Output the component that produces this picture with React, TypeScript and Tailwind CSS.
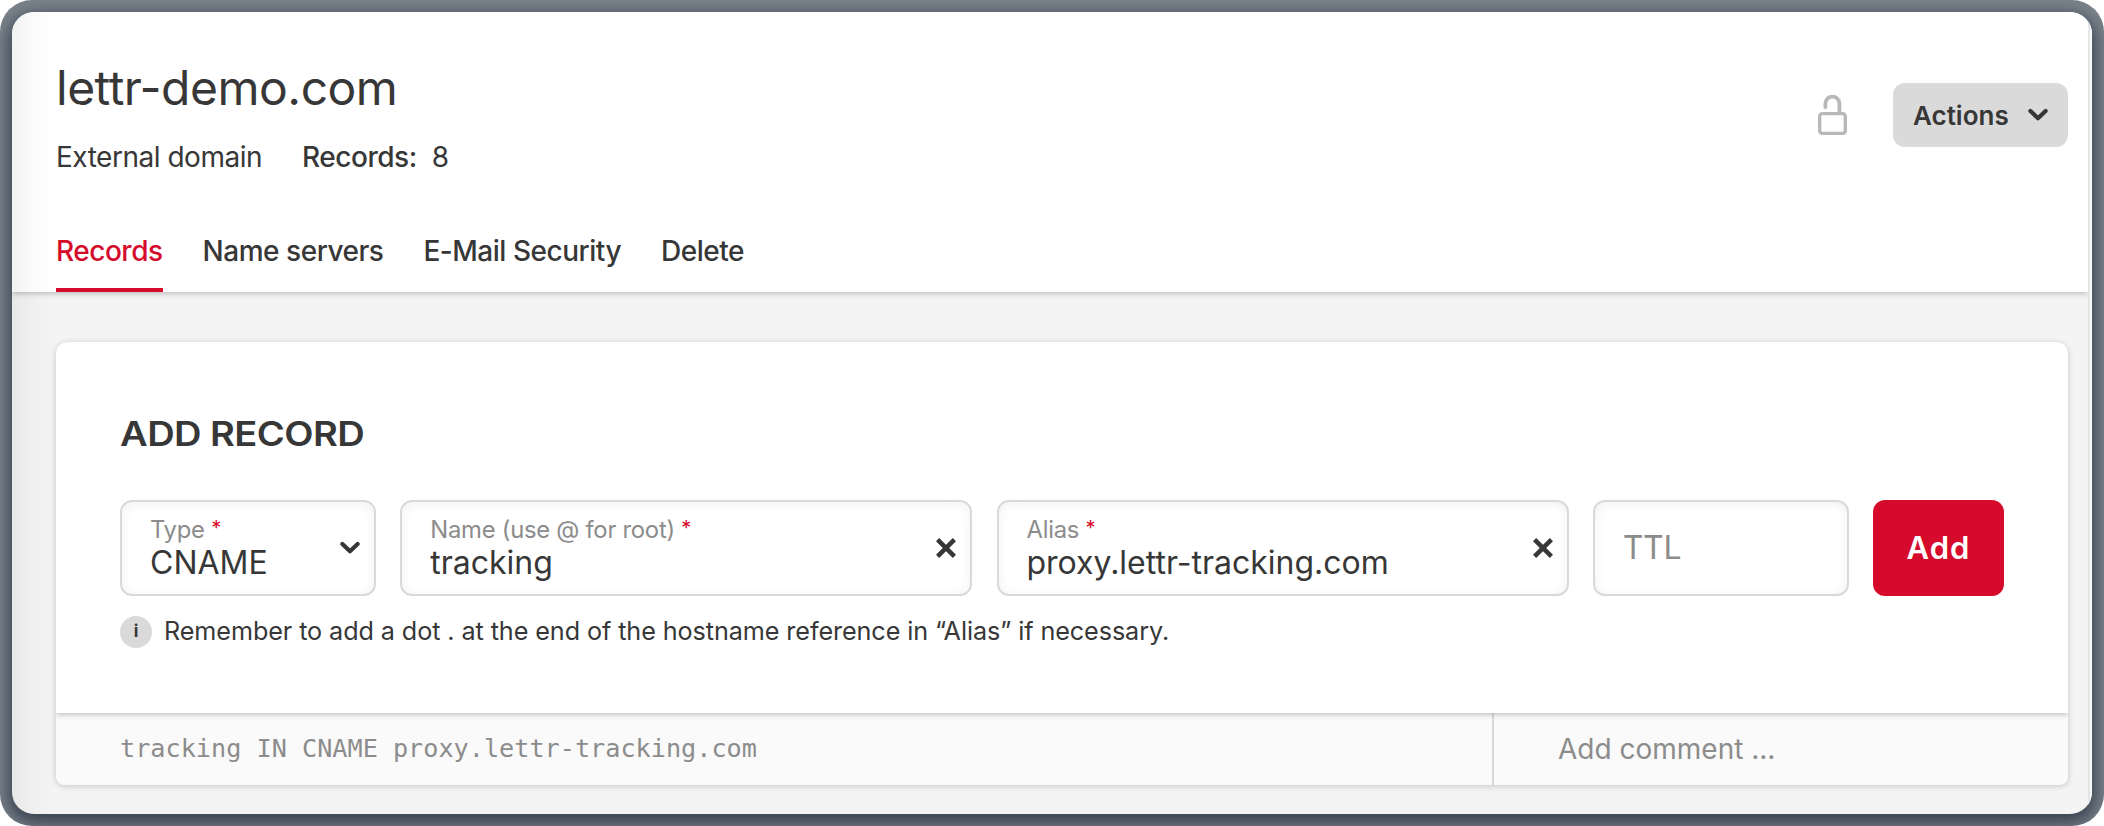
import type { ReactNode } from 'react';

const tabs = ['Records', 'Name servers', 'E-Mail Security', 'Delete'];

function ChevronIcon() {
  return (
    <svg width="20" height="14" viewBox="0 0 20 14" fill="none" className="shrink-0" aria-hidden>
      <path d="M2.4 3L10 10.2L17.6 3" stroke="#373737" strokeWidth="4.2" strokeLinecap="round" strokeLinejoin="round" />
    </svg>
  );
}

function ClearIcon() {
  return (
    <svg width="20" height="20" viewBox="0 0 20 20" fill="none" className="shrink-0" aria-hidden>
      <path d="M1.6 1.6L18.4 18.4M18.4 1.6L1.6 18.4" stroke="#373737" strokeWidth="4.5" />
    </svg>
  );
}

function UnlockIcon() {
  return (
    <svg width="30" height="40" viewBox="0 0 30 40" fill="none" aria-hidden>
      <rect x="1.7" y="18.6" width="25.6" height="19.8" rx="2.6" stroke="#b8b8b8" strokeWidth="3.4" />
      <path d="M7.4 12.2V8.6a7 7 0 0 1 14 0v9.4" stroke="#b8b8b8" strokeWidth="3.8" strokeLinecap="round" />
    </svg>
  );
}

interface FieldProps {
  label: string;
  value: string;
  icon: ReactNode;
}

function Field({ label, value, icon }: FieldProps) {
  return (
    <div className="flex h-24 items-center justify-between rounded-[12px] border-2 border-[#d9d9d9] bg-white pr-[14px] pl-7 shadow-[inset_0_2px_12px_rgba(0,0,0,0.06)]">
      <div className="flex flex-col">
        <label className="text-[23.8px] leading-[30px] tracking-[-0.25px] text-[#8c8c8c]">
          {label} <span className="align-[3px] text-[20px] leading-none text-[#d60b2b]">*</span>
        </label>
        <span className="text-[32px] leading-[36px]">{value}</span>
      </div>
      {icon}
    </div>
  );
}

export default function App() {
  return (
    <div className="h-[826px] w-[2104px] bg-white font-['Inter',sans-serif] text-[#373737]">
      <div className="h-full overflow-hidden rounded-[32px] bg-[#7b838c] p-3">
        <div className="relative flex h-full flex-col overflow-hidden rounded-[22px] bg-[#f4f4f4] pr-1 shadow-[0_6px_16px_4px_rgba(20,32,46,0.62)]">
          {/* Domain header with tabs */}
          <header className="relative flex h-[280px] shrink-0 flex-col justify-between bg-white pr-5 pl-11 shadow-[0_1px_6px_rgba(0,0,0,0.28)]">
            <div className="flex justify-between">
              <div className="pt-[46px]">
                <h1 className="text-[48px] leading-[60px] tracking-[-0.5px]">lettr-demo.com</h1>
                <p className="flex pt-[22px] text-[28px] leading-[34px] tracking-[-0.48px]">
                  <span>External domain</span>
                  <span className="ml-10 font-medium">Records:</span>
                  <span className="ml-[15px]">8</span>
                </p>
              </div>
              <div className="box-content flex h-16 items-center gap-[45px] pt-[71px]">
                <UnlockIcon />
                <button className="flex h-16 w-[175px] items-center justify-between rounded-[12px] bg-[#dadada] pr-5 pl-5 text-[26px] font-semibold">
                  Actions
                  <ChevronIcon />
                </button>
              </div>
            </div>
            <nav className="flex gap-10">
              {tabs.map((tab, i) => (
                <a
                  key={tab}
                  className={
                    i === 0
                      ? 'h-[63px] border-b-4 border-[#d60b2b] text-[28px] leading-[44px] font-medium tracking-[-0.48px] text-[#d60b2b]'
                      : 'h-[63px] text-[28px] leading-[44px] font-medium tracking-[-0.48px]'
                  }
                >
                  {tab}
                </a>
              ))}
            </nav>
          </header>

          {/* Add record card */}
          <main className="pt-[50px] pr-5 pl-11">
            <section className="h-[443px] overflow-hidden rounded-t-[12px] rounded-b-[8px] bg-[#fafafa] shadow-[0_1px_6px_rgba(0,0,0,0.2)]">
              <div className="relative h-[371px] bg-white px-16 pt-[70px] shadow-[0_1px_6px_rgba(0,0,0,0.28)]">
                <h2 className="w-fit origin-left scale-x-[1.12] text-[34px] leading-[44px] font-semibold tracking-[-0.5px]">
                  ADD RECORD
                </h2>
                <div className="mt-11 grid grid-cols-[256px_1fr_1fr_256px_131px] gap-x-[24.25px]">
                  <Field label="Type" value="CNAME" icon={<ChevronIcon />} />
                  <Field label="Name (use @ for root)" value="tracking" icon={<ClearIcon />} />
                  <Field label="Alias" value="proxy.lettr-tracking.com" icon={<ClearIcon />} />
                  <div className="flex h-24 items-center rounded-[12px] border-2 border-[#d9d9d9] bg-white pl-7 text-[32px] tracking-[-0.3px] text-[#8c8c8c] shadow-[inset_0_2px_12px_rgba(0,0,0,0.06)]">
                    TTL
                  </div>
                  <button className="h-24 rounded-[12px] bg-[#d60b2b] text-[31px] font-semibold tracking-[1px] text-white">
                    Add
                  </button>
                </div>
                <div className="mt-5 flex h-8 items-center gap-3">
                  <span className="flex size-8 items-center justify-center rounded-full bg-[#dadada] text-[17px] font-bold">i</span>
                  <p className="text-[25.2px] tracking-[-0.09px]">
                    Remember to add a dot . at the end of the hostname reference in “Alias” if necessary.
                  </p>
                </div>
              </div>
              <div className="flex h-[72px] items-center">
                <code className="flex-1 pl-16 font-['DejaVu_Sans_Mono',monospace] text-[25.2px] text-[#8c8c8c]">
                  tracking IN CNAME proxy.lettr-tracking.com
                </code>
                <div className="flex h-full w-[576px] items-center border-l-2 border-[#d9d9d9] pl-16 text-[28px] text-[#8c8c8c]">
                  Add comment ...
                </div>
              </div>
            </section>
          </main>

          {/* Edge shading on the left, scroll gutter on the right */}
          <div className="pointer-events-none absolute inset-y-0 left-0 w-11 bg-linear-to-r from-black/5 via-black/2 via-45% to-transparent" />
          <div className="pointer-events-none absolute inset-y-0 right-0 w-1 border-l-2 border-[#e6e6e8] bg-[#fafafa]" />
        </div>
      </div>
    </div>
  );
}
